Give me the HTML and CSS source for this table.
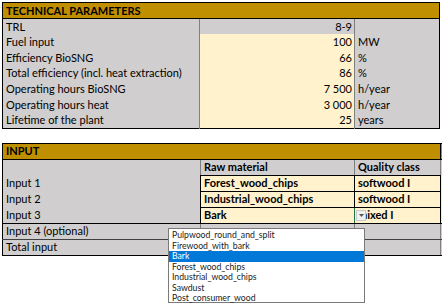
FILE: index.html
```html
<!DOCTYPE html>
<html>
<head>
<meta charset="utf-8">
<link rel="stylesheet" href="styles.css">
</head>
<body>
<div class="sheet">
  <table class="tbl tech">
    <colgroup><col class="c1"><col class="c2"><col class="c3"></colgroup>
    <tr class="hdr"><td colspan="3">TECHNICAL PARAMETERS</td></tr>
    <tr><td class="lbl">TRL</td><td class="val grey">8-9</td><td class="unit"></td></tr>
    <tr><td class="lbl">Fuel input</td><td class="val">100</td><td class="unit">MW</td></tr>
    <tr><td class="lbl">Efficiency BioSNG</td><td class="val">66</td><td class="unit">%</td></tr>
    <tr><td class="lbl">Total efficiency (incl. heat extraction)</td><td class="val">86</td><td class="unit">%</td></tr>
    <tr><td class="lbl">Operating hours BioSNG</td><td class="val">7 500</td><td class="unit">h/year</td></tr>
    <tr><td class="lbl">Operating hours heat</td><td class="val">3 000</td><td class="unit">h/year</td></tr>
    <tr class="last"><td class="lbl">Lifetime of the plant</td><td class="val">25</td><td class="unit">years</td></tr>
  </table>

  <table class="tbl input">
    <colgroup><col class="d1"><col class="d2"><col class="d3"><col class="d4"></colgroup>
    <tr class="hdr"><td colspan="3">INPUT</td><td class="hdr-ext"></td></tr>
    <tr class="colhdr"><td class="lbl"></td><td class="ch">Raw material</td><td class="ch">Quality class</td><td class="ext grey"></td></tr>
    <tr><td class="lbl">Input 1</td><td class="in">Forest_wood_chips</td><td class="in">softwood I</td><td class="ext peach"></td></tr>
    <tr><td class="lbl">Input 2</td><td class="in">Industrial_wood_chips</td><td class="in">softwood I</td><td class="ext peach"></td></tr>
    <tr class="r3"><td class="lbl">Input 3</td><td class="in sel">Bark</td><td class="in q3">mixed I<span class="ddbtn"><svg width="5" height="3" viewBox="0 0 5 3"><path d="M0 0H5L2.5 3Z" fill="#555"/></svg></span></td><td class="ext peach"></td></tr>
    <tr class="r4"><td class="lbl">Input 4 (optional)</td><td class="g"></td><td class="g"></td><td class="ext grey"></td></tr>
    <tr class="r5"><td class="lbl">Total input</td><td class="g"></td><td class="g"></td><td class="ext grey"></td></tr>
  </table>

  <ul class="dropdown">
    <li>Pulpwood_round_and_split</li>
    <li>Firewood_with_bark</li>
    <li class="on">Bark</li>
    <li>Forest_wood_chips</li>
    <li>Industrial_wood_chips</li>
    <li>Sawdust</li>
    <li>Post_consumer_wood</li>
  </ul>
</div>
</body>
</html>
```

FILE: styles.css
```css
html, body {
  margin: 0;
  padding: 0;
  background: #ffffff;
}
body {
  font-family: Lato, "Open Sans", sans-serif;
  font-size: 11px;
  color: #000;
  width: 442px;
  height: 307px;
  overflow: hidden;
}
.sheet {
  position: relative;
  padding: 2px 0 0 2px;
}
.tbl {
  border-collapse: collapse;
  table-layout: fixed;
}
.tbl td {
  padding: 0 2px 0 3px;
  height: 15.7px;
  line-height: 14px;
  white-space: nowrap;
  overflow: hidden;
  box-sizing: border-box;
}
.tech {
  width: 437px;
  border: 1.5px solid #000;
}
.c1 { width: 197px; }
.c2 { width: 155px; }
.c3 { width: 85px; }
.hdr td {
  background: #bf8f00;
  font-weight: bold;
  height: 16px;
  border-bottom: 1px solid #000;
}
.lbl { background: #d0cece; }
.val {
  background: #fff2cc;
  text-align: right;
  border-left: 1.5px solid #7f7f7f;
  border-right: 1.5px solid #7f7f7f;
}
.val.grey { background: #d0cece; }
.unit { background: #d0cece; }

.input {
  margin-top: 14px;
  width: 442px;
  border-top: 1.5px solid #000;
}
.input td { height: 16px; }
.d1 { width: 198px; }
.d2 { width: 154px; }
.d3 { width: 86px; }
.d4 { width: 4px; }
.input .hdr td { border-left: 1.5px solid #000; }
.input .hdr td.hdr-ext { border-left: 1px solid #000; }
.input td.lbl { border-left: 1.5px solid #000; }
.ch {
  background: #d0cece;
  font-weight: bold;
  border-left: 1px solid #7f7f7f;
  border-bottom: 1px solid #000;
}
.in {
  background: #fff2cc;
  font-weight: bold;
  border: 1px solid #000;
}
.ext { padding: 0 !important; border-left: 1px solid #7f7f7f; }
.ext.grey { background: #d0cece; }
.ext.peach { background: #fce4d6; }
.sel {
  border-top: 1.5px solid #217346;
  border-right: 1.5px solid #217346;
}
.q3 { position: relative; }
.ddbtn {
  position: absolute;
  left: 1px;
  top: 2px;
  width: 10px;
  height: 11px;
  background: #f0f0f0;
  border: 1px solid #c8c8c8;
  box-sizing: border-box;
  display: flex;
  align-items: center;
  justify-content: center;
}
.r3 td { border-bottom: 1.5px solid #000; }
.r4 td { border-bottom: 1px solid #404040; }
.r5 td { border-bottom: 1.5px solid #000; }
.g { background: #d0cece; border-left: 1px solid #7f7f7f; }

.dropdown {
  position: absolute;
  left: 168px;
  top: 228px;
  width: 197px;
  height: 75px;
  margin: 0;
  padding: 1px 0 0 0;
  list-style: none;
  background: #ffffff;
  border: 1px solid #7a7a7a;
  box-sizing: border-box;
  font-size: 8.7px;
}
.dropdown li {
  height: 10.5px;
  line-height: 10.5px;
  padding-left: 3px;
  color: #222;
}
.dropdown li.on {
  background: #0078d7;
  color: #fff;
}
```
